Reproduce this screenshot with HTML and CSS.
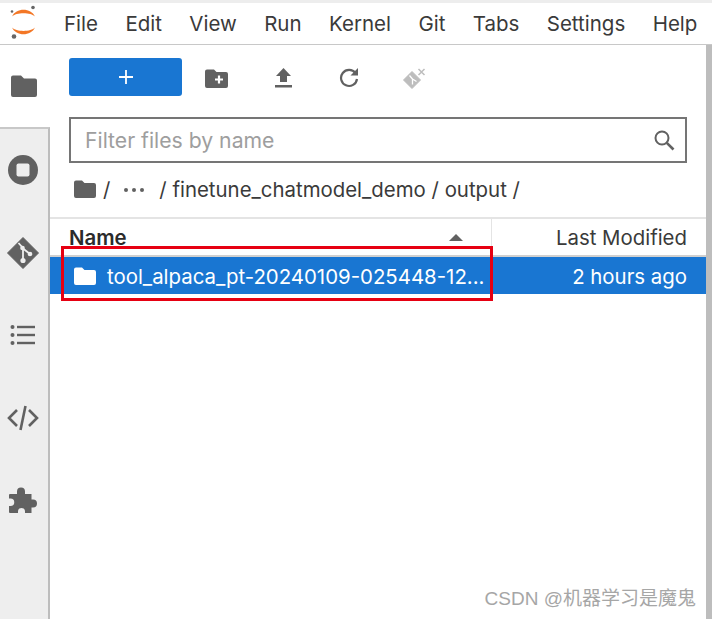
FILE: index.html
```html
<!DOCTYPE html>
<html lang="en">
<head>
  <meta charset="UTF-8">
  <meta name="viewport" content="width=device-width, initial-scale=1.0">
  <title>JupyterLab</title>
  <link rel="stylesheet" href="styles.css">
</head>
<body>
  <div class="app">
    <!-- top menu -->
    <header class="menubar">
      <svg class="logo" width="38" height="38" viewBox="0 0 38 38">
        <path d="M8 11.500 C12 2.500 27 2.500 31 11.500 C27 7 12 7 8 11.500 Z" fill="#f37726"/>
        <path d="M8 22.500 C12 31.500 27 31.500 31 22.500 C27 27 12 27 8 22.500 Z" fill="#f37726"/>
        <circle cx="29" cy="2.500" r="1.800" fill="#666"/>
        <circle cx="8" cy="6.500" r="1.300" fill="#666"/>
        <circle cx="10" cy="31.500" r="2.300" fill="#666"/>
      </svg>
      <nav class="menu">
        <span>File</span>
        <span>Edit</span>
        <span>View</span>
        <span>Run</span>
        <span>Kernel</span>
        <span>Git</span>
        <span>Tabs</span>
        <span>Settings</span>
        <span>Help</span>
      </nav>
    </header>

    <div class="main">
      <!-- left tabs -->
      <aside class="sidebar">
        <div class="tab tab-active">
          <svg width="28" height="24" viewBox="0 0 28 24"><path d="M3 1.500h8l3 3h11a2 2 0 0 1 2 2V21a2 2 0 0 1-2 2H3a2 2 0 0 1-2-2V3.500a2 2 0 0 1 2-2z" fill="#616161"/></svg>
        </div>
        <div class="tabs-rest">
          <div class="tab tab-stop">
            <svg width="32" height="32" viewBox="0 0 32 32"><circle cx="16" cy="16" r="15" fill="#616161"/><rect x="9.500" y="9.500" width="13" height="13" rx="2" fill="#eee"/></svg>
          </div>
          <div class="tab tab-git">
            <svg width="32" height="32" viewBox="0 0 32 32">
              <path d="M16 .5 31.500 16 16 31.500.5 16z" fill="#616161" stroke="#616161" stroke-width="1" stroke-linejoin="round"/>
              <path d="M11.500 6 16 11v12M16 11.500 23 17" fill="none" stroke="#eee" stroke-width="1.800"/>
              <circle cx="16" cy="23.500" r="2.600" fill="#eee"/><circle cx="15.500" cy="11" r="2.300" fill="#eee"/><circle cx="23" cy="17" r="2.300" fill="#eee"/>
            </svg>
          </div>
          <div class="tab tab-list">
            <svg width="26" height="22" viewBox="0 0 26 22" fill="#616161">
              <circle cx="2.500" cy="3" r="2"/><rect x="7" y="1.800" width="18" height="2.400"/>
              <circle cx="2.500" cy="11" r="2"/><rect x="7" y="9.800" width="18" height="2.400"/>
              <circle cx="2.500" cy="19" r="2"/><rect x="7" y="17.800" width="18" height="2.400"/>
            </svg>
          </div>
          <div class="tab tab-code">
            <svg width="32" height="26" viewBox="0 0 32 26" fill="none" stroke="#616161" stroke-width="2.600">
              <path d="M10 5 2 13l8 8M22 5l8 8-8 8"/><path d="M18.500 1 13.500 25"/>
            </svg>
          </div>
          <div class="tab tab-ext">
            <svg width="30" height="30" viewBox="0 0 30 30"><path d="M2 9h7V6.500a4 4 0 0 1 8 0V9h6.500v5.500H25a4 4 0 0 1 0 8h-1.500V28H17v-1.500a3.500 3.500 0 0 0-7 0V28H2a1 1 0 0 1-1-1v-6h1.500a3.700 3.700 0 0 0 0-7.500H1V10a1 1 0 0 1 1-1z" fill="#616161"/></svg>
          </div>
        </div>
      </aside>

      <!-- file browser -->
      <section class="browser">
        <div class="toolbar">
          <button class="launcher">
            <svg width="16" height="16" viewBox="0 0 16 16"><path d="M8 1v14M1 8h14" stroke="#fff" stroke-width="1.800"/></svg>
          </button>
          <div class="tools">
            <svg width="23" height="19" viewBox="0 0 23 19"><path d="M2 .5h7l2.500 2.500H21a2 2 0 0 1 2 2V17a2 2 0 0 1-2 2H2a2 2 0 0 1-2-2V2.500a2 2 0 0 1 2-2z" fill="#616161"/><path d="M14 6.500v8M10 10.500h8" stroke="#fff" stroke-width="2.200"/></svg>
            <svg width="17" height="20" viewBox="0 0 17 20"><path d="M8.500 0 16 8h-4v6H5V8H1z" fill="#616161"/><rect x="0" y="17" width="17" height="2.500" fill="#616161"/></svg>
            <svg width="20" height="20" viewBox="0 0 20 20" fill="none"><path d="M16.500 5.200A8 8 0 1 0 18 11" stroke="#616161" stroke-width="2.200"/><path d="M19 0v7.500h-7.500z" fill="#616161"/></svg>
            <svg class="tool-git" width="24" height="24" viewBox="0 0 24 24"><path d="M10 3.500 18.500 12 10 20.500 1.500 12z" fill="#bdbdbd" stroke="#bdbdbd" stroke-linejoin="round"/><path d="M7.500 7.500 10.500 11v5.500M10.500 11 14.500 13.500" fill="none" stroke="#fff" stroke-width="1.300"/><path d="M16.500 1l6 6M22.500 1l-6 6" stroke="#bdbdbd" stroke-width="1.500"/></svg>
          </div>
        </div>

        <div class="filter">
          <span class="filter-text">Filter files by name</span>
          <svg width="22" height="22" viewBox="0 0 22 22" fill="none" stroke="#616161"><circle cx="9" cy="9" r="6.500" stroke-width="2"/><path d="M13.800 13.800 20.500 20.500" stroke-width="2.600"/></svg>
        </div>

        <div class="crumbs">
          <svg width="22" height="18" viewBox="0 0 22 18"><path d="M2 .5h6l2.500 2.500H20a2 2 0 0 1 2 2V16a2 2 0 0 1-2 2H2a2 2 0 0 1-2-2V2.500a2 2 0 0 1 2-2z" fill="#616161"/></svg>
          <span class="sep-first">/</span>
          <span class="dots">
            <i></i><i></i><i></i>
          </span>
          <span>/ finetune_chatmodel_demo / output /</span>
        </div>

        <div class="listing">
          <div class="list-head">
            <div class="col-name">
              <span>Name</span>
              <i class="caret"></i>
            </div>
            <div class="col-date">Last Modified</div>
          </div>
          <div class="row row-selected">
            <div class="row-name">
              <svg width="22" height="18" viewBox="0 0 22 18"><path d="M2 .5h6l2.500 2.500H20a2 2 0 0 1 2 2V16a2 2 0 0 1-2 2H2a2 2 0 0 1-2-2V2.500a2 2 0 0 1 2-2z" fill="#fff"/></svg>
              <span>tool_alpaca_pt-20240109-025448-12...</span>
            </div>
            <div class="row-date">2 hours ago</div>
          </div>
        </div>
      </section>
    </div>
  </div>

  <div class="highlight"></div>
  <div class="watermark">CSDN @机器学习是魔鬼</div>
</body>
</html>
```

FILE: styles.css
```css
* {
  box-sizing: border-box;
}
html, body {
  margin: 0;
  height: 100%;
  overflow: hidden;
}
body {
  font-family: Inter, "Noto Sans CJK SC", sans-serif;
  color: #333;
  background: #fff;
  position: relative;
}
svg {
  display: block;
  flex: none;
}
.app {
  height: 100%;
  display: flex;
  flex-direction: column;
  border-top: 3px solid #ededed;
}

/* menu bar */
.menubar {
  height: 42px;
  flex: none;
  display: flex;
  align-items: center;
  padding-left: 4px;
  border-bottom: 1px solid #c8c8c8;
}
.menu {
  display: flex;
  gap: 27.400px;
  margin-left: 22px;
  font-size: 20.500px;
  color: #3a3a3a;
}

.main {
  flex: 1;
  display: flex;
  min-height: 0;
  border-right: 6px solid #bdbdbd;
}

/* left tabs */
.sidebar {
  width: 50px;
  flex: none;
  display: flex;
  flex-direction: column;
}
.tab {
  display: flex;
  align-items: center;
  justify-content: center;
  height: 82.500px;
}
.tab-active {
  height: 82px;
  padding-right: 2px;
}
.tabs-rest {
  flex: 1;
  background: #eee;
  border-top: 2px solid #c8c8c8;
  border-right: 2px solid #bdbdbd;
}
.tabs-rest .tab {
  padding-right: 3px;
}

/* file browser */
.browser {
  flex: 1;
  min-width: 0;
  display: flex;
  flex-direction: column;
}
.toolbar {
  display: flex;
  align-items: center;
  height: 38px;
  margin: 13px 0 0 19px;
}
.launcher {
  width: 113px;
  height: 38px;
  padding: 0;
  border: none;
  border-radius: 3px;
  background: #1976d2;
  display: flex;
  align-items: center;
  justify-content: center;
}
.tools {
  display: flex;
  align-items: center;
  margin: 2px 0 0 23px;
  gap: 47px;
}
.tool-git {
  margin: 3px 0 0 -4px;
}
.filter {
  margin: 21px 19px 0 19px;
  height: 46px;
  border: 2px solid #757575;
  display: flex;
  align-items: center;
  justify-content: space-between;
  padding: 0 10px 0 14px;
}
.filter-text {
  font-size: 21.200px;
  color: #9e9e9e;
}
.crumbs {
  display: flex;
  align-items: center;
  margin: 14px 0 0 24px;
  height: 24px;
  font-size: 20.400px;
  color: #3a3a3a;
}
.sep-first {
  margin-left: 7px;
}
.dots {
  display: flex;
  gap: 4px;
  margin: 2px 15px 0 14px;
}
.dots i {
  width: 4px;
  height: 4px;
  border-radius: 50%;
  background: #616161;
}

/* file listing */
.listing {
  margin-top: 16px;
  border-top: 2px solid #e4e4e4;
}
.list-head {
  display: flex;
  height: 36px;
  font-size: 20.400px;
}
.col-name {
  flex: 1;
  display: flex;
  align-items: flex-end;
  justify-content: space-between;
  padding: 0 28px 5px 19px;
  border-right: 1px solid #e4e4e4;
  font-weight: 600;
  color: #2b2b2b;
}
.caret {
  width: 0;
  height: 0;
  margin-bottom: 9px;
  border-left: 7px solid transparent;
  border-right: 7px solid transparent;
  border-bottom: 7px solid #616161;
}
.col-date {
  width: 214px;
  flex: none;
  display: flex;
  align-items: flex-end;
  justify-content: flex-end;
  padding: 0 19px 5px 0;
  color: #3a3a3a;
}
.row {
  display: flex;
  height: 39px;
  align-items: center;
  justify-content: space-between;
  padding: 1px 19px 0 24px;
  font-size: 20.400px;
  border-top: 2px solid #d0d0d0;
}
.row-selected {
  background: #1976d2;
  color: #fff;
}
.row-name {
  display: flex;
  align-items: center;
  gap: 11px;
}
.row-name svg {
  margin-top: -1px;
}

/* red annotation box and site mark, both over the page */
.highlight {
  position: absolute;
  left: 61px;
  top: 246px;
  width: 432px;
  height: 55px;
  border: 3px solid #e60012;
}
.watermark {
  position: absolute;
  right: 16px;
  bottom: 9px;
  font-family: "Liberation Sans", "Noto Sans CJK SC", sans-serif;
  font-size: 19px;
  color: #a6a6a6;
}
```
